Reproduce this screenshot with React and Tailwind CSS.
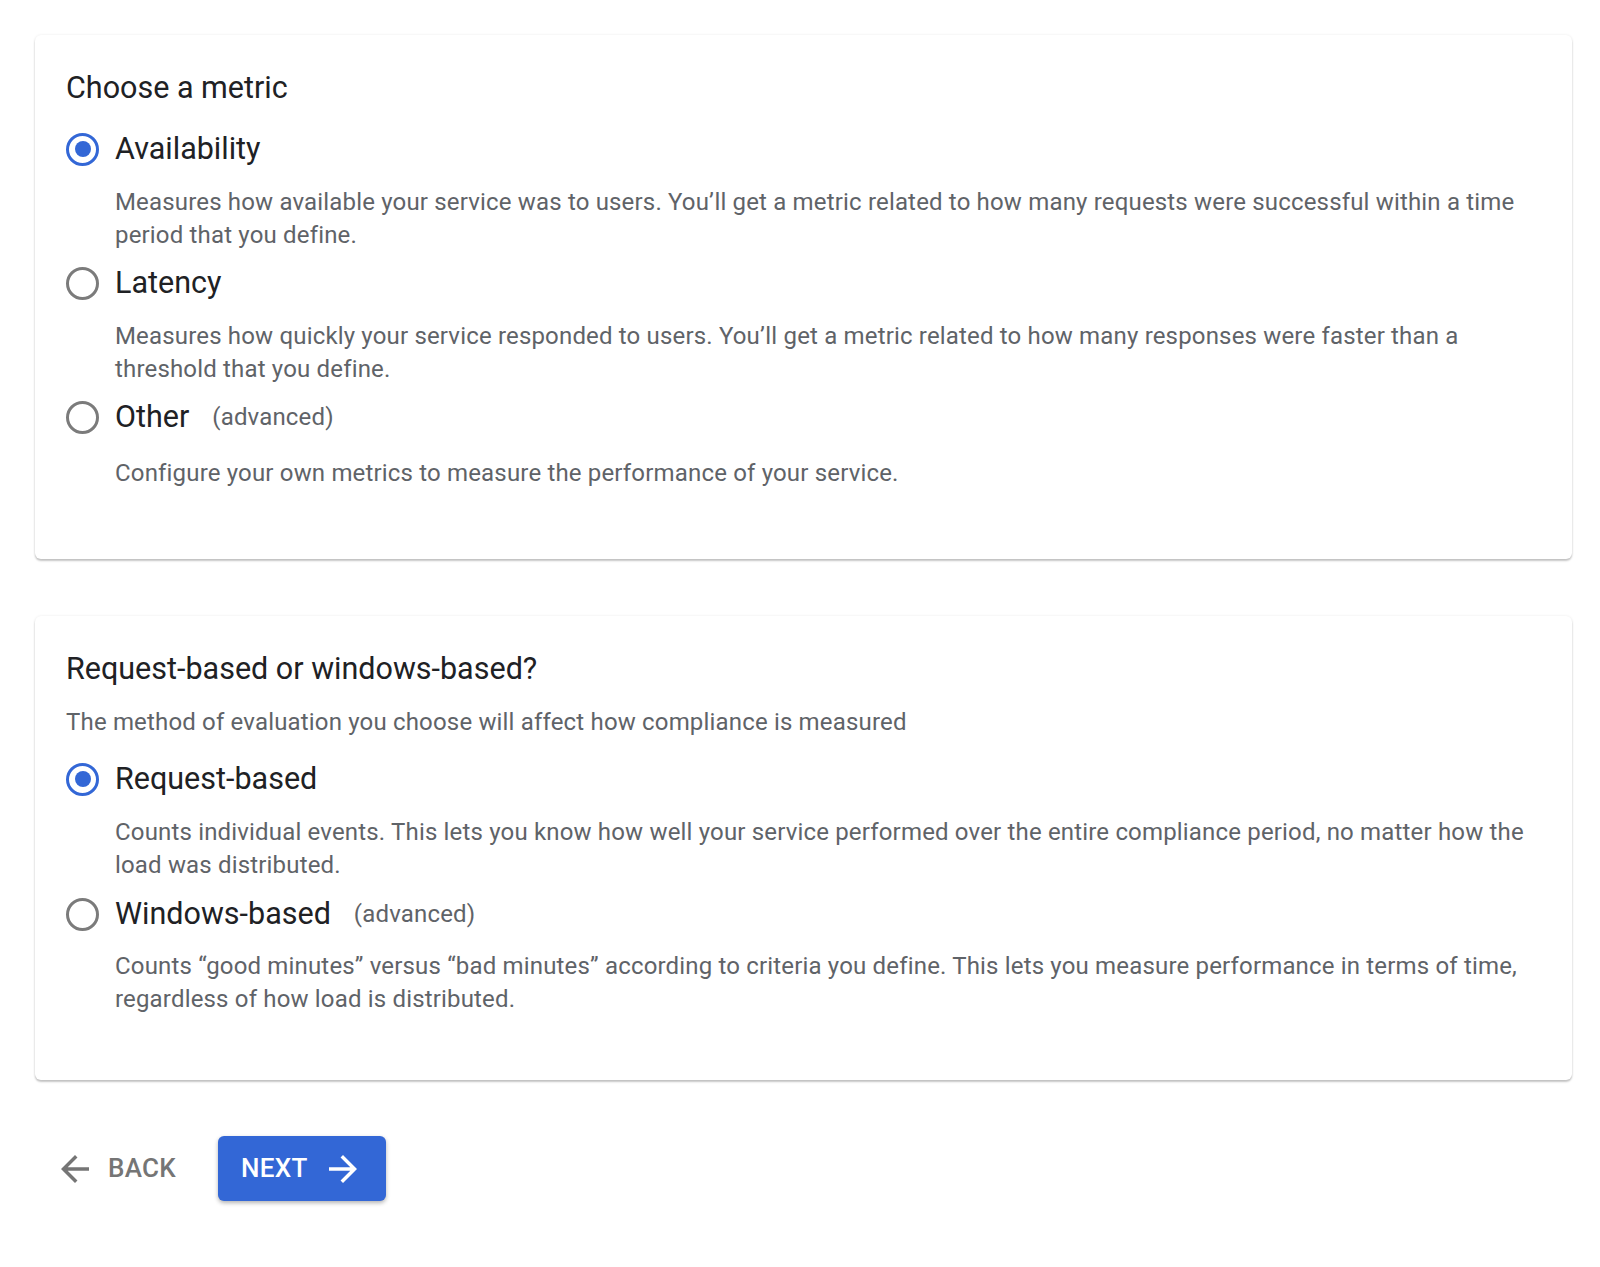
import React, { useState } from 'react';

const Radio = ({ checked }) =>
    checked ? (
        <span className="w-[33px] h-[33px] shrink-0 rounded-full border-[3px] border-[#3367d6] flex items-center justify-center">
            <span className="w-[16px] h-[16px] rounded-full bg-[#3367d6]" />
        </span>
    ) : (
        <span className="w-[33px] h-[33px] shrink-0 rounded-full border-[3px] border-[#7b7b7b]" />
    );

const Option = ({ label, advanced, desc, checked, onSelect, descClass = 'mt-[17px]' }) => (
    <div>
        <button onClick={onSelect} className="flex items-center h-[40px] gap-[16px] text-left">
            <Radio checked={checked} />
            <span className="text-[30.5px] leading-[40px] text-[#202124]">{label}</span>
            {advanced && <span className="ml-[7px] text-[24px] tracking-[0.17px] leading-[40px] text-[#5f6368]">(advanced)</span>}
        </button>
        <p className={`${descClass} pl-[49px] text-[24px] tracking-[0.17px] leading-[33px] text-[#5f6368]`}>{desc}</p>
    </div>
);

const Card = ({ children, className }) => (
    <div className={`bg-white rounded-[6px] px-[31px] shadow-[0_2px_2px_rgba(0,0,0,0.22),0_0_3px_rgba(0,0,0,0.08)] ${className}`}>
        {children}
    </div>
);

const App = () => {
    const [metric, setMetric] = useState('availability');
    const [method, setMethod] = useState('request');

    return (
        <div className="min-h-screen bg-white pt-[35px] pl-[35px] pr-[28px] font-['Roboto',sans-serif]">
            <Card className="pt-[33px] pb-[69px]">
                <h2 className="text-[30.5px] leading-[40px] text-[#202124]">Choose a metric</h2>
                <div className="mt-[21px] flex flex-col gap-[11px]">
                    <Option
                        label="Availability"
                        checked={metric === 'availability'}
                        onSelect={() => setMetric('availability')}
                        desc="Measures how available your service was to users. You’ll get a metric related to how many requests were successful within a time period that you define."
                    />
                    <Option
                        label="Latency"
                        checked={metric === 'latency'}
                        onSelect={() => setMetric('latency')}
                        desc="Measures how quickly your service responded to users. You’ll get a metric related to how many responses were faster than a threshold that you define."
                    />
                    <Option
                        label="Other"
                        advanced
                        checked={metric === 'other'}
                        onSelect={() => setMetric('other')}
                        descClass="mt-[20px]"
                        desc="Configure your own metrics to measure the performance of your service."
                    />
                </div>
            </Card>

            <Card className="mt-[57px] pt-[33px] pb-[64px]">
                <h2 className="text-[30.5px] leading-[40px] text-[#202124]">Request-based or windows-based?</h2>
                <p className="mt-[17px] text-[24px] tracking-[0.17px] leading-[33px] text-[#5f6368]">
                    The method of evaluation you choose will affect how compliance is measured
                </p>
                <div className="mt-[20px] flex flex-col gap-[12px]">
                    <Option
                        label="Request-based"
                        checked={method === 'request'}
                        onSelect={() => setMethod('request')}
                        desc="Counts individual events. This lets you know how well your service performed over the entire compliance period, no matter how the load was distributed."
                    />
                    <Option
                        label="Windows-based"
                        advanced
                        checked={method === 'windows'}
                        onSelect={() => setMethod('windows')}
                        descClass="mt-[16px]"
                        desc="Counts “good minutes” versus “bad minutes” according to criteria you define. This lets you measure performance in terms of time, regardless of how load is distributed."
                    />
                </div>
            </Card>

            <div className="mt-[56px] flex items-center">
                <button className="flex items-center h-[65px] pl-[26px] pr-[42px] gap-[19px] text-[#757575]">
                    <svg className="w-[28px] h-[28px]" viewBox="4 4 16 16" fill="currentColor">
                        <path d="M20 11H7.83l5.59-5.59L12 4l-8 8 8 8 1.41-1.41L7.83 13H20v-2z" />
                    </svg>
                    <span className="text-[26px] font-medium tracking-[0.3px]">BACK</span>
                </button>
                <button className="flex items-center h-[65px] pl-[23px] pr-[29px] gap-[21px] rounded-[6px] bg-[#3367d6] text-white shadow-[0_2px_4px_rgba(0,0,0,0.3)]">
                    <span className="text-[26px] font-medium tracking-[0.3px]">NEXT</span>
                    <svg className="w-[28px] h-[28px]" viewBox="4 4 16 16" fill="currentColor">
                        <path d="M12 4l-1.41 1.41L16.17 11H4v2h12.17l-5.58 5.59L12 20l8-8z" />
                    </svg>
                </button>
            </div>
        </div>
    );
};

export default App;
